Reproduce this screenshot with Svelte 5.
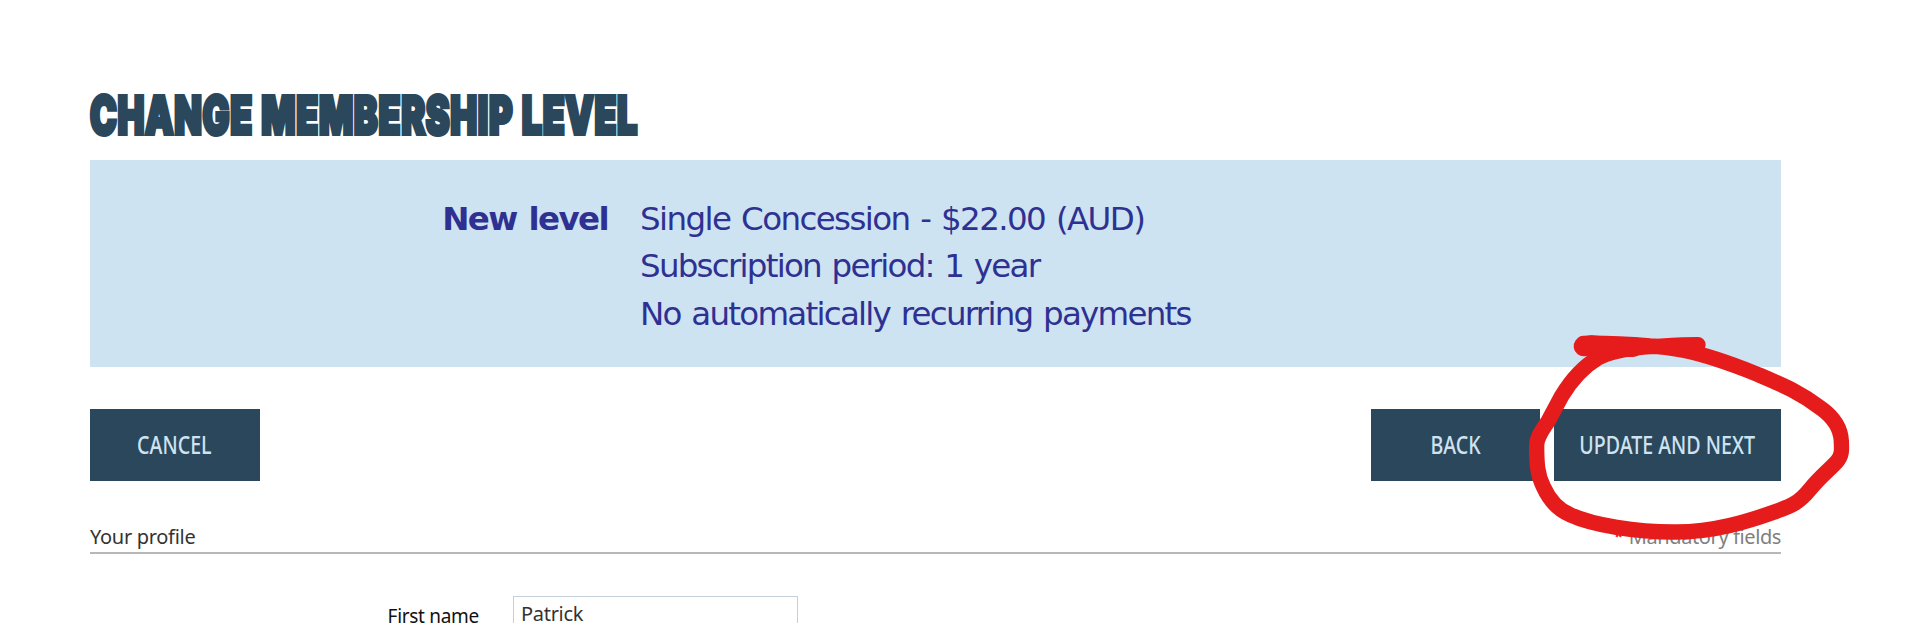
<script lang="ts">
	let firstName = 'Patrick';

	const details = [
		'Single Concession - $22.00 (AUD)',
		'Subscription period: 1 year',
		'No automatically recurring payments'
	];
</script>

<main class="page">
	<h1 class="title"><span>CHANGE MEMBERSHIP LEVEL</span></h1>

	<section class="level">
		<div class="level__label">New level</div>
		<div class="level__details">
			{#each details as line}
				<div>{line}</div>
			{/each}
		</div>
	</section>

	<div class="actions">
		<button class="button" type="button"><span>CANCEL</span></button>
		<div class="actions__right">
			<button class="button" type="button"><span>BACK</span></button>
			<button class="button button--wide" type="button"><span>UPDATE AND NEXT</span></button>
		</div>
	</div>

	<div class="section-head">
		<span>Your profile</span>
		<span class="mandatory"><b>*</b><span>Mandatory fields</span></span>
	</div>

	<div class="field">
		<label for="first-name">First name</label>
		<input id="first-name" type="text" bind:value={firstName} />
	</div>

	<svg class="marker" viewBox="0 0 1140 720" fill="none" aria-hidden="true">
		<path d="M594 74 C535 74 480 79 430 81 C375 86 330 94 292 115 C250 140 211 185 185 228 L144 304 C126 332 109 352 110 378 C110 430 112 463 130 500 C149 542 174 569 210 584 C280 616 410 636 520 636 C640 638 750 602 823 576 C875 558 898 548 930 508 C960 470 989 449 1011 424 C1029 403 1024 383 1024 363 C1022 323 1001 293 966 267 C899 216 850 196 770 162 C700 134 610 103 550 91 C520 85 480 79 450 78 C380 72 320 69 250 70" />
		<path d="M251 79 L272 76 L330 81 L400 81" class="marker__start" />
	</svg>
</main>

<style>
	:global(body) {
		margin: 0;
		background: #fff;
		overflow: hidden;
	}

	.page {
		position: relative;
		box-sizing: border-box;
		height: 623px;
		padding: 86px 139px 0 90px;
		overflow: hidden;
		font-family: 'Noto Sans', sans-serif;
		font-size: 20px;
		letter-spacing: -0.3px;
		color: #333;
	}

	.title {
		height: 60px;
		margin: 0 0 13.5px;
		font: 900 52px/60px Inter, sans-serif;
		letter-spacing: 1px;
		word-spacing: 1px;
		color: #2b475c;
		white-space: nowrap;
	}

	.title span {
		display: inline-block;
		transform: scaleX(0.689);
		transform-origin: 0 50%;
		-webkit-text-stroke: 4px #2b475c;
	}

	.level {
		display: flex;
		box-sizing: border-box;
		height: 207px;
		padding-top: 36px;
		background: #cee3f1;
		font-family: 'DejaVu Sans', sans-serif;
		font-size: 32.5px;
		line-height: 47.6px;
		letter-spacing: -1.75px;
		word-spacing: 2px;
		color: #2e3192;
		white-space: nowrap;
	}

	.level__label {
		width: 518px;
		margin-right: 32px;
		font-weight: 700;
		letter-spacing: -1.6px;
		text-align: right;
	}

	.level__details div:first-child {
		letter-spacing: -1.6px;
	}

	.actions,
	.actions__right,
	.section-head {
		display: flex;
		justify-content: space-between;
	}

	.actions {
		margin-top: 42.5px;
	}

	.actions__right {
		gap: 14px;
	}

	.button {
		display: flex;
		align-items: center;
		justify-content: center;
		width: 169.5px;
		height: 72px;
		padding: 0 0 3px;
		border: 0;
		background: #2b475c;
		font: 500 25.5px/32px 'Noto Sans', sans-serif;
		color: #cee3f1;
		white-space: nowrap;
	}

	.button--wide {
		width: 227px;
	}

	.button span {
		display: block;
		transform: scaleX(0.77);
	}

	.section-head {
		height: 28px;
		margin-top: 43px;
		border-bottom: 2px solid #b8b8b8;
		line-height: 25px;
	}

	.mandatory {
		display: flex;
		gap: 6px;
		letter-spacing: -0.4px;
		color: #808080;
	}

	.mandatory b {
		font-size: 17px;
		line-height: 25px;
		color: #e51c1c;
	}

	.field {
		display: flex;
		margin-top: 42px;
	}

	.field label {
		width: 389px;
		padding-top: 7px;
		margin-right: 34px;
		font-size: 19px;
		line-height: 26px;
		color: #111;
		text-align: right;
	}

	.field input {
		box-sizing: border-box;
		width: 285px;
		height: 40px;
		padding: 0 7px 6px;
		border: 1px solid #c5d1d9;
		background: #fff;
		font: inherit;
		letter-spacing: -0.3px;
		color: #333;
	}

	/* hand-drawn ring laid over the submit button */
	.marker {
		position: absolute;
		top: 320px;
		left: 1500px;
		width: 380px;
		height: 240px;
		stroke: #e61c1c;
		stroke-width: 46;
		stroke-linecap: round;
		stroke-linejoin: round;
		pointer-events: none;
	}

	.marker__start {
		stroke-width: 60;
	}
</style>
